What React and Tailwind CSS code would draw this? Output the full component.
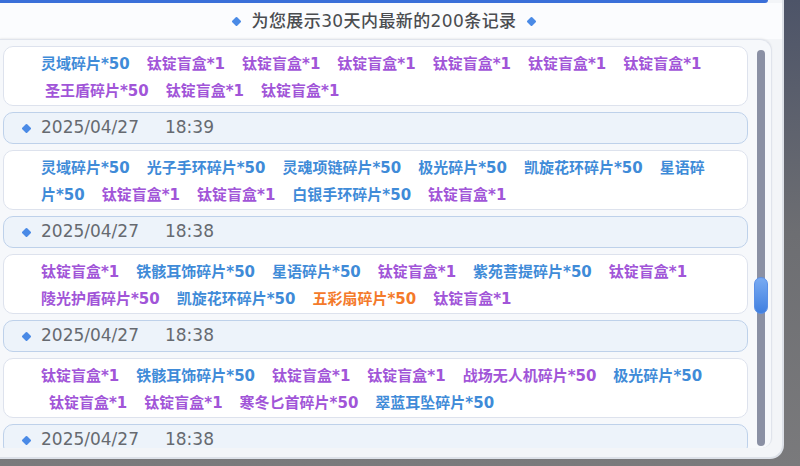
import React from "react";

const BLUE = "text-[#3f8bd8]";
const PURPLE = "text-[#a155d8]";
const ORANGE = "text-[#f47a2a]";

const box = (count) => ({ name: "钛锭盲盒", count, color: PURPLE });

const blocks = [
    {
        lines: [
            { indent: "pl-[37px]", items: [{ name: "灵域碎片", count: 50, color: BLUE }, box(1), box(1), box(1), box(1), box(1), box(1)] },
            { indent: "pl-[41px]", items: [{ name: "圣王盾碎片", count: 50, color: PURPLE }, box(1), box(1)] },
        ],
    },
    {
        date: "2025/04/27",
        time: "18:39",
        lines: [
            {
                indent: "pl-[37px]",
                items: [
                    { name: "灵域碎片", count: 50, color: BLUE },
                    { name: "光子手环碎片", count: 50, color: BLUE },
                    { name: "灵魂项链碎片", count: 50, color: BLUE },
                    { name: "极光碎片", count: 50, color: BLUE },
                    { name: "凯旋花环碎片", count: 50, color: BLUE },
                    { name: "星语碎", color: BLUE },
                ],
            },
            {
                indent: "pl-[37px]",
                items: [
                    { name: "片", count: 50, color: BLUE },
                    box(1),
                    box(1),
                    { name: "白银手环碎片", count: 50, color: BLUE },
                    box(1),
                ],
            },
        ],
    },
    {
        date: "2025/04/27",
        time: "18:38",
        lines: [
            {
                indent: "pl-[37px]",
                items: [
                    box(1),
                    { name: "铁骸耳饰碎片", count: 50, color: BLUE },
                    { name: "星语碎片", count: 50, color: BLUE },
                    box(1),
                    { name: "紫苑菩提碎片", count: 50, color: BLUE },
                    box(1),
                ],
            },
            {
                indent: "pl-[37px]",
                items: [
                    { name: "陵光护盾碎片", count: 50, color: PURPLE },
                    { name: "凯旋花环碎片", count: 50, color: BLUE },
                    { name: "五彩扇碎片", count: 50, color: ORANGE },
                    box(1),
                ],
            },
        ],
    },
    {
        date: "2025/04/27",
        time: "18:38",
        lines: [
            {
                indent: "pl-[37px]",
                items: [
                    box(1),
                    { name: "铁骸耳饰碎片", count: 50, color: BLUE },
                    box(1),
                    box(1),
                    { name: "战场无人机碎片", count: 50, color: PURPLE },
                    { name: "极光碎片", count: 50, color: BLUE },
                ],
            },
            {
                indent: "pl-[45px]",
                items: [box(1), box(1), { name: "寒冬匕首碎片", count: 50, color: PURPLE }, { name: "翠蓝耳坠碎片", count: 50, color: BLUE }],
            },
        ],
    },
    { date: "2025/04/27", time: "18:38" },
];

function Diamond() {
    return <span className="inline-block w-[7px] h-[7px] rotate-45 bg-[#4a8ae6] rounded-[1px]" />;
}

function DateRow({ date, time }) {
    return (
        <div className="h-[32px] shrink-0 flex items-center rounded-[10px] border border-[#bed1ea] bg-[#edf3fa] pl-[19px] text-[17px] text-[#666a70]">
            <Diamond />
            <span className="ml-[11px]">{date}</span>
            <span className="ml-[26px]">{time}</span>
        </div>
    );
}

function RewardCard({ lines }) {
    return (
        <div className="h-[60px] shrink-0 flex flex-col pt-[4px] rounded-[10px] border border-[#dde2ed] bg-white">
            {lines.map((line, i) => (
                <div key={i} className={`h-[27px] flex items-center gap-x-[17px] whitespace-nowrap text-[15px] font-semibold ${line.indent}`}>
                    {line.items.map((item, j) => (
                        <span key={j} className={item.color}>
                            {item.name}
                            {item.count !== undefined && `*${item.count}`}
                        </span>
                    ))}
                </div>
            ))}
        </div>
    );
}

export default function App() {
    return (
        <div
            className="w-[800px] h-[466px] overflow-hidden bg-gradient-to-b from-[#4d5468] via-[#6d6e72] to-[#7a7a7c]"
            style={{ fontFamily: '"DejaVu Sans", "Noto Sans CJK SC", sans-serif' }}
        >
            <div className="w-[784px] h-[459px] flex flex-col bg-[#f3f5f8] rounded-br-[14px] border-r-[2px] border-b-[2px] border-[#dde1e8]">
                <div className="h-[3px] w-[768px] bg-[#3a6fd9] rounded-br-[3px]" />
                <div className="h-[36px] pt-[1px] flex items-center bg-[#fbfcfe]">
                    <div className="w-[768px] flex items-center justify-center gap-[12px] text-[17px] font-medium text-[#4a4c50]">
                        <Diamond />
                        <span className="tracking-[0.4px]">为您展示30天内最新的200条记录</span>
                        <Diamond />
                    </div>
                </div>
                <div className="flex-1 min-h-0 mr-[10px] mb-[9px] flex rounded-tr-[12px] rounded-br-[10px] border-t border-r border-[#e0e4ec] bg-[#f6f8fb] shadow-[0_-1px_2px_rgba(0,0,0,0.06)] overflow-hidden">
                    <div className="ml-[3px] w-[745px] pt-[6px] flex flex-col gap-[6px]">
                        {blocks.map((block, i) => (
                            <React.Fragment key={i}>
                                {block.date && <DateRow date={block.date} time={block.time} />}
                                {block.lines && <RewardCard lines={block.lines} />}
                            </React.Fragment>
                        ))}
                    </div>
                    <div className="ml-[9px] mt-[10px] mb-[2px] w-[8px] relative rounded-full bg-[#8a90a4]">
                        <div className="absolute left-[-3px] top-[227px] w-[14px] h-[37px] rounded-full bg-gradient-to-b from-[#78aaf2] to-[#3f7fe0] border border-[#5a8fe6]" />
                    </div>
                </div>
            </div>
        </div>
    );
}
